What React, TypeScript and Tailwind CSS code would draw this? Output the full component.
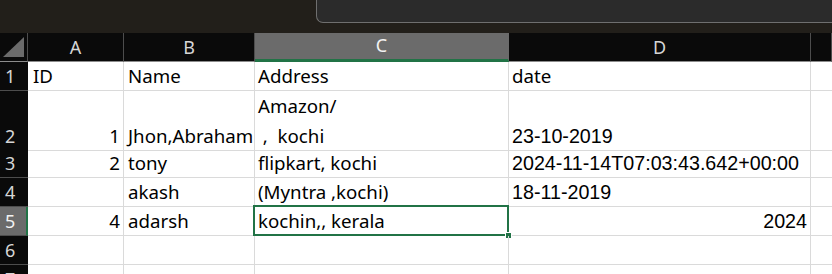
import React from 'react';

const cols = ['A', 'B', 'C', 'D', ''];

type Row = {
  n: number;
  h: string;
  a?: string;
  b?: string;
  c?: React.ReactNode;
  d?: string;
  dRight?: boolean;
};

const rows: Row[] = [
  { n: 1, h: 'h-[29px]', a: 'ID', b: 'Name', c: 'Address', d: 'date' },
  { n: 2, h: 'h-[58px]', a: '1', b: 'Jhon,Abraham', c: 'wrap', d: '23-10-2019' },
  { n: 3, h: 'h-[29px]', a: '2', b: 'tony', c: 'flipkart, kochi', d: '2024-11-14T07:03:43.642+00:00' },
  { n: 4, h: 'h-[29px]', b: 'akash', c: '(Myntra ,kochi)', d: '18-11-2019' },
  { n: 5, h: 'h-[29px]', a: '4', b: 'adarsh', c: 'kochin,, kerala', d: '2024', dRight: true },
  { n: 6, h: 'h-[29px]' },
  { n: 7, h: 'h-[29px]' },
];

const aptos = "font-['Noto_Sans',sans-serif] text-[18.7px]";
const arial = "font-['Liberation_Sans',Arial,sans-serif] text-[19.7px]";

export default function App() {
  return (
    <div className="w-[832px] h-[274px] overflow-hidden bg-white">
      {/* title strip */}
      <div className="flex h-[33px] bg-[#221f1a]">
        <div className="w-[316px]" />
        <div className="flex-1 h-[23px] bg-[#2b2b2b] border-l border-b border-[#6f6f6f] rounded-bl-[7px]" />
      </div>

      {/* column headers */}
      <div className="grid grid-cols-[28px_96px_131px_254px_302px_1fr] h-[29px] bg-[#0a0a0a]">
        <div className="relative border-r border-b border-r-[#4d4d4d] border-b-[#8c8c8c]">
          <svg className="absolute left-[3px] top-[4px]" width="22" height="21" viewBox="0 0 22 21">
            <polygon points="0,20 21,0 21,20" fill="#6b6b6b" />
          </svg>
        </div>
        {cols.map((c, i) => (
          <div
            key={i}
            className={`flex items-end justify-center pb-[3px] text-[18px] leading-[22px] font-['Noto_Sans',sans-serif] border-r ${
              c === 'C'
                ? 'bg-[#6b6b6b] text-[#f2f2f2] border-r-[#6b6b6b] border-b-[3px] border-b-[#217346]'
                : 'text-[#d6d6d6] border-r-[#4d4d4d] border-b border-b-[#8c8c8c]'
            }`}
          >
            {c}
          </div>
        ))}
      </div>

      {/* rows */}
      {rows.map((r) => (
        <div key={r.n} className={`grid grid-cols-[28px_96px_131px_254px_302px_1fr] ${r.h} text-black`}>
          <div
            className={`flex items-end pl-[5px] pb-[3px] leading-[22px] font-['Noto_Sans',sans-serif] text-[18px] border-b border-b-[#4d4d4d] ${
              r.n === 5
                ? 'bg-[#6b6b6b] text-[#f2f2f2] border-r-2 border-r-[#217346]'
                : 'bg-[#0a0a0a] text-[#d6d6d6]'
            }`}
          >
            {r.n}
          </div>
          <div
            className={`flex items-end pb-[3px] leading-[22px] ${aptos} border-r border-b border-[#dadada] ${
              r.n === 1 ? 'justify-start pl-[5px]' : 'justify-end pr-[3px]'
            }`}
          >
            {r.a}
          </div>
          <div className={`flex items-end pl-[4px] pb-[3px] leading-[22px] whitespace-nowrap ${aptos} border-r border-b border-[#dadada]`}>
            {r.b}
          </div>
          <div className={`relative flex items-end pl-[3px] pb-[3px] leading-[22px] ${aptos} border-r border-b border-[#dadada]`}>
            {r.c === 'wrap' ? (
              <div className="flex flex-col leading-[30px] -mb-[4px] whitespace-pre">
                <span>Amazon/</span>
                <span>{' ,  kochi'}</span>
              </div>
            ) : (
              r.c
            )}
            {r.n === 5 && (
              <>
                <div className="absolute -left-[2px] -top-[2px] -right-[1px] -bottom-[1px] border-2 border-[#217346]" />
                <div className="absolute -right-[4px] -bottom-[4px] w-[7px] h-[7px] bg-[#217346] border border-white" />
              </>
            )}
          </div>
          <div
            className={`flex items-end pb-[3px] leading-[22px] whitespace-nowrap border-r border-b border-[#dadada] ${
              r.dRight ? 'justify-end pr-[3px]' : 'pl-[3px]'
            } ${r.n === 1 ? aptos : arial}`}
          >
            {r.d}
          </div>
          <div className="border-b border-[#dadada]" />
        </div>
      ))}
    </div>
  );
}
